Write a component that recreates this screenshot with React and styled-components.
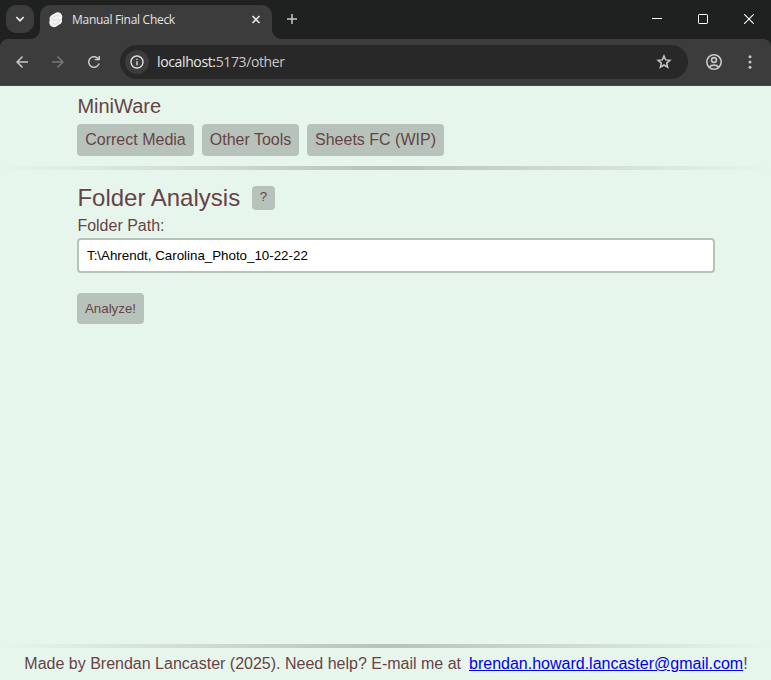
import React, { useState } from "react";
import styled, { createGlobalStyle } from "styled-components";

const GlobalStyle = createGlobalStyle`
  * { box-sizing: border-box; }
  html, body { margin: 0; height: 100%; overflow: hidden; }
  body { background: #e6f6ec; color: #684346; font: 16px/18px "Liberation Sans", Arial, sans-serif; }
  svg { display: block; flex: none; }
`;

const Window = styled.div`
  display: flex;
  flex-direction: column;
  width: 771px;
  height: 680px;
`;

const TabStrip = styled.div`
  display: flex;
  height: 39px;
  background: #1f2120;
`;

const TabSearch = styled.div`
  display: grid;
  place-items: center;
  width: 28px;
  height: 28px;
  margin: 5px 6px 0;
  border-radius: 10px;
  background: #3c3c3c;
`;

const Tab = styled.div`
  position: relative;
  display: flex;
  align-items: center;
  width: 232px;
  height: 34px;
  margin-top: 5px;
  padding: 0 10px 5px 9px;
  border-radius: 10px 10px 0 0;
  background: #3c3c3c;
  &::before, &::after {
    content: "";
    position: absolute;
    bottom: 0;
    width: 10px;
    height: 10px;
  }
  &::before { left: -10px; background: radial-gradient(circle at 0 0, #1f2120 9.5px, #3c3c3c 10.5px); }
  &::after { right: -10px; background: radial-gradient(circle at 100% 0, #1f2120 9.5px, #3c3c3c 10.5px); }
`;

const TabTitle = styled.span`
  flex: 1;
  margin-left: 9px;
  color: #e3e3e3;
  font: 12px/16px "Open Sans", sans-serif;
  letter-spacing: -0.29px;
  white-space: nowrap;
`;

const NewTab = styled.div`
  display: grid;
  place-items: center;
  width: 40px;
  height: 38px;
`;

const Caption = styled.div`
  display: flex;
  margin-left: auto;
  margin-right: -1px;
  height: 39px;
`;

const CaptionButton = styled.div`
  display: grid;
  place-items: center;
  width: 46px;
  height: 38px;
`;

const ToolbarBackdrop = styled.div`
  height: 47px;
  background: #1f2120;
`;

const Toolbar = styled.div`
  display: flex;
  align-items: center;
  height: 47px;
  padding-bottom: 1px;
  border-bottom: 1px solid #4a4a4a;
  border-radius: 8px 8px 0 0;
  background: #3c3c3c;
`;

const ToolButton = styled.div`
  display: grid;
  place-items: center;
  width: 36px;
  height: 34px;
  color: ${(p) => (p.$dim ? "#777777" : "#c7c7c7")};
`;

const NavGroup = styled.div`
  display: flex;
  width: 120px;
  padding-left: 4px;
`;

const AddressBar = styled.div`
  display: flex;
  align-items: center;
  width: 568px;
  height: 34px;
  padding: 0 15px 0 5px;
  border-radius: 17px;
  background: #282828;
  color: #c7c7c7;
`;

const SiteInfo = styled.div`
  display: grid;
  place-items: center;
  width: 24px;
  height: 24px;
  border-radius: 50%;
  background: #3c3c3c;
  color: #e3e3e3;
`;

const Url = styled.span`
  flex: 1;
  margin-left: 8px;
  color: #c7c7c7;
  font: 14px/20px "Open Sans", sans-serif;
  letter-spacing: -0.37px;
  b { color: #e8e8e8; font-weight: 400; }
`;

const EndGroup = styled.div`
  display: flex;
  padding-left: 8px;
`;

const Page = styled.div`
  display: flex;
  flex: 1;
  flex-direction: column;
`;

const Header = styled.header`
  padding: 9px 56px 10px 77px;
`;

const Brand = styled.div`
  padding-left: 0.4px;
  font-size: 20px;
  line-height: 23px;
`;

const Nav = styled.nav`
  display: flex;
  gap: 8px;
  margin-top: 6px;
`;

const NavButton = styled.a`
  width: ${(p) => p.$width}px;
  height: 32px;
  padding: 7px 0;
  border-radius: 4px;
  background: #b7c3ba;
  text-align: center;
  white-space: nowrap;
`;

const Divider = styled.div`
  flex: none;
  height: 4px;
  background: linear-gradient(to right, #e6f6ec, #b7c3ba 50%, #e6f6ec);
`;

const Main = styled.main`
  flex: 1;
  padding: 14px 56px 0 77px;
`;

const Heading = styled.div`
  display: flex;
  align-items: flex-start;
  height: 33px;
`;

const Title = styled.h1`
  width: 163px;
  margin: 0;
  padding-left: 0.4px;
  font-size: 24px;
  font-weight: 400;
  line-height: 28px;
  white-space: nowrap;
`;

const HelpButton = styled.button`
  width: 23px;
  height: 24px;
  margin: 2px 0 0 12px;
  padding: 0 0 3px;
  border: 0;
  border-radius: 4px;
  background: #b7c3ba;
  color: inherit;
  font: 13.333px/15px "Liberation Sans", Arial, sans-serif;
`;

const Label = styled.label`
  display: block;
  height: 21px;
  padding-left: 0.4px;
`;

const PathInput = styled.input`
  display: block;
  width: 100%;
  height: 35px;
  padding: 0 8px;
  border: 2px solid #b7c3ba;
  border-radius: 4px;
  background: #fff;
  color: #000;
  font: 13.333px "Liberation Sans", Arial, sans-serif;
`;

const AnalyzeButton = styled.button`
  display: block;
  width: 67px;
  height: 31px;
  margin-top: 20px;
  padding: 0;
  border: 0;
  border-radius: 4px;
  background: #b7c3ba;
  color: inherit;
  font: 13.333px "Liberation Sans", Arial, sans-serif;
`;

const Footer = styled.footer`
  display: flex;
  justify-content: center;
  height: 32px;
  padding: 7px 0 0 1px;
  white-space: nowrap;
`;

const MailLink = styled.a`
  margin-left: 8px;
  color: #0000ee;
  text-decoration: underline;
`;

const Material = ({ d, size = 16 }) => (
  <svg width={size} height={size} viewBox="0 0 24 24" fill="currentColor"><path d={d} /></svg>
);

export default function App() {
  const [path, setPath] = useState("T:\\Ahrendt, Carolina_Photo_10-22-22");
  return (
    <Window>
      <GlobalStyle />
      <TabStrip>
        <TabSearch>
          <svg width="10" height="8" viewBox="0 0 10 8" fill="none" stroke="#e8e8e8" strokeWidth="1.7"><path d="M1.3 2 5 5.7 8.700 2" /></svg>
        </TabSearch>
        <Tab>
          <svg width="14" height="16" viewBox="0 0 14 16">
            <path d="M12.4 2.200C11 .2 8.300-.3 6.300.9L2.900 3.100C.8 4.500.1 6.400.8 8.300c-.8 1.600-.8 3.200.2 4.800 1.400 2.100 4.200 2.700 6.300 1.400l3.500-2.200c2-1.300 2.700-3.200 2-5.100.8-1.700.7-3.500-.4-5z" fill="#f3f3f3" />
            <path d="M10.300 5C10.300 3.400 8.700 2.700 7.300 3.500L4.500 5.300C2.600 6.600 3.500 8.600 5.300 8.200l3.200-1c2.100-.5 2.800 1.500 1.100 2.800L6.700 12c-1.500.9-3 .2-3-1.300" fill="none" stroke="#cfcfcf" strokeWidth=".7" />
          </svg>
          <TabTitle>Manual Final Check</TabTitle>
          <svg width="12" height="12" viewBox="0 0 12 12" stroke="#e3e3e3" strokeWidth="1.600"><path d="m2.500 2 7 7m0-7-7 7" /></svg>
        </Tab>
        <NewTab>
          <svg width="10" height="10" viewBox="0 0 10 10" stroke="#c7c7c7" strokeWidth="1.500"><path d="M5 0v10M0 5h10" /></svg>
        </NewTab>
        <Caption>
          <CaptionButton><svg width="10" height="10" viewBox="0 0 10 10" stroke="#fff"><path d="M0 4.500h10" /></svg></CaptionButton>
          <CaptionButton><svg width="10" height="10" viewBox="0 0 10 10" fill="none" stroke="#fff"><rect x=".5" y=".5" width="9" height="9" rx=".7" /></svg></CaptionButton>
          <CaptionButton><svg width="10" height="10" viewBox="0 0 10 10" stroke="#fff" strokeWidth="1.100"><path d="m0 0 10 10M10 0 0 10" /></svg></CaptionButton>
        </Caption>
      </TabStrip>
      <ToolbarBackdrop>
        <Toolbar>
          <NavGroup>
            <ToolButton><Material size={18} d="M20 11H7.830l5.590-5.590L12 4l-8 8 8 8 1.410-1.410L7.830 13H20v-2z" /></ToolButton>
            <ToolButton $dim><Material size={18} d="M12 4l-1.410 1.410L16.170 11H4v2h12.170l-5.580 5.590L12 20l8-8z" /></ToolButton>
            <ToolButton><Material size={18} d="M17.650 6.350C16.200 4.900 14.210 4 12 4c-4.420 0-7.990 3.580-7.990 8s3.570 8 7.990 8c3.730 0 6.840-2.550 7.730-6h-2.080c-.82 2.330-3.040 4-5.650 4-3.310 0-6-2.690-6-6s2.690-6 6-6c1.660 0 3.140.69 4.220 1.780H13v2h7V4h-2v2.700z" /></ToolButton>
          </NavGroup>
          <AddressBar>
            <SiteInfo><Material size={16} d="M11 7h2v2h-2zm0 4h2v6h-2zm1-9C6.480 2 2 6.480 2 12s4.480 10 10 10 10-4.480 10-10S17.520 2 12 2zm0 18c-4.410 0-8-3.590-8-8s3.590-8 8-8 8 3.590 8 8-3.590 8-8 8z" /></SiteInfo>
            <Url><b>localhost:</b>5173/other</Url>
            <svg width="18" height="18" viewBox="0 0 18 18" fill="none" stroke="currentColor" strokeWidth="1.500"><path d="m9 3 1.650 3.900 4.250.38-3.200 2.800.95 4.150L9 12l-3.650 2.230.95-4.150-3.200-2.800 4.250-.38z" /></svg>
          </AddressBar>
          <EndGroup>
            <ToolButton>
              <svg width="18" height="18" viewBox="0 0 18 18" fill="none" stroke="currentColor" strokeWidth="1.600"><circle cx="9" cy="9" r="7.200" /><circle cx="9" cy="7" r="2.400" /><path d="M4 14.200c1.400-1.400 3-2.100 5-2.100s3.600.7 5 2.100" /></svg>
            </ToolButton>
            <ToolButton><svg width="4" height="14" viewBox="0 0 4 14" fill="currentColor"><circle cx="2" cy="1.700" r="1.500" /><circle cx="2" cy="7" r="1.500" /><circle cx="2" cy="12.300" r="1.500" /></svg></ToolButton>
          </EndGroup>
        </Toolbar>
      </ToolbarBackdrop>
      <Page>
        <Header>
          <Brand>MiniWare</Brand>
          <Nav>
            <NavButton $width={117}>Correct Media</NavButton>
            <NavButton $width={97}>Other Tools</NavButton>
            <NavButton $width={137}>Sheets FC (WIP)</NavButton>
          </Nav>
        </Header>
        <Divider />
        <Main>
          <Heading>
            <Title>Folder Analysis</Title>
            <HelpButton>?</HelpButton>
          </Heading>
          <Label htmlFor="folder-path">Folder Path:</Label>
          <PathInput id="folder-path" value={path} onChange={(e) => setPath(e.target.value)} />
          <AnalyzeButton>Analyze!</AnalyzeButton>
        </Main>
        <Divider />
        <Footer>
          <span>Made by Brendan Lancaster (2025). Need help? E-mail me at</span>
          <MailLink href="mailto:brendan.howard.lancaster@gmail.com">brendan.howard.lancaster@gmail.com</MailLink>
          <span>!</span>
        </Footer>
      </Page>
    </Window>
  );
}
